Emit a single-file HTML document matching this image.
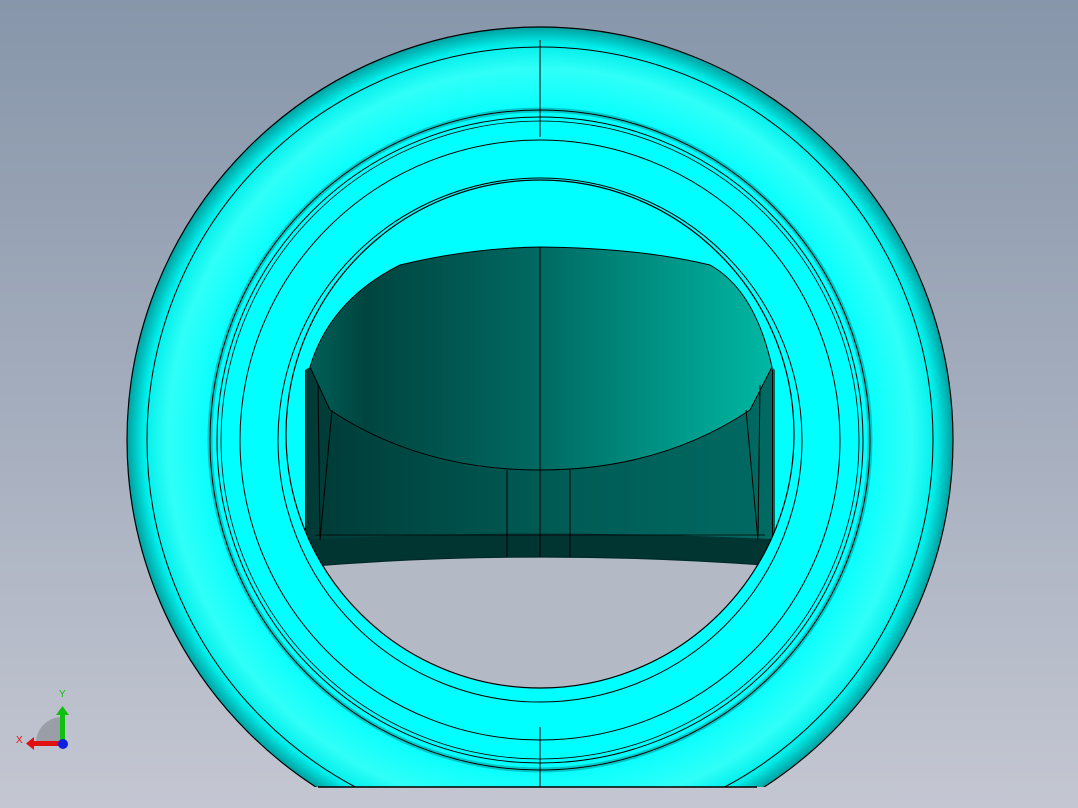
<!DOCTYPE html>
<html><head><meta charset="utf-8"><style>
html,body{margin:0;padding:0;width:1078px;height:808px;overflow:hidden}
svg{display:block}
</style></head><body>
<svg width="1078" height="808" viewBox="0 0 1078 808" xmlns="http://www.w3.org/2000/svg">
<defs>
<linearGradient id="bg" x1="0" y1="0" x2="0" y2="1">
<stop offset="0" stop-color="#8796aa"/><stop offset="0.5" stop-color="#a4adbd"/><stop offset="1" stop-color="#c4c7d2"/>
</linearGradient>
<radialGradient id="ring" cx="540" cy="440" r="413" gradientUnits="userSpaceOnUse">
<stop offset="0.78" stop-color="#00ffff"/><stop offset="0.9" stop-color="#30fff8"/><stop offset="0.96" stop-color="#00eeea"/><stop offset="1" stop-color="#00a0a0"/>
</radialGradient>
<linearGradient id="inner" x1="0" y1="0" x2="1" y2="0">
<stop offset="0" stop-color="#006058"/><stop offset="0.12" stop-color="#00443f"/><stop offset="0.5" stop-color="#006a62"/><stop offset="1" stop-color="#00b8a4"/>
</linearGradient>
<linearGradient id="wall" x1="0" y1="0" x2="1" y2="0">
<stop offset="0" stop-color="#003a36"/><stop offset="0.5" stop-color="#005a54"/><stop offset="1" stop-color="#006a62"/>
</linearGradient>
<clipPath id="cut"><rect x="0" y="0" width="1078" height="787"/></clipPath>
<clipPath id="hole"><circle cx="540" cy="434" r="254"/></clipPath>
</defs>
<rect width="1078" height="808" fill="url(#bg)"/>
<g clip-path="url(#cut)">
<circle cx="540" cy="440" r="413" fill="url(#ring)" stroke="#000" stroke-width="1.2"/>
<circle cx="540" cy="440" r="393" fill="none" stroke="#000" stroke-width="1"/>
<circle cx="540" cy="440" r="330" fill="none" stroke="#00c8c8" stroke-width="5"/>
<circle cx="540" cy="440" r="330" fill="none" stroke="#000" stroke-width="1"/>
<circle cx="540" cy="440" r="323" fill="none" stroke="#000" stroke-width="1"/>
<circle cx="540" cy="440" r="319" fill="none" stroke="#000" stroke-width="0.8"/>
<circle cx="540" cy="440" r="300" fill="none" stroke="#000" stroke-width="1"/>
<circle cx="540" cy="440" r="262" fill="none" stroke="#000" stroke-width="1"/>
</g>
<line x1="757" y1="787" x2="318" y2="787" stroke="#000" stroke-width="1.5"/>
<g clip-path="url(#hole)">
<path d="M305 370 L310 367 L772 367 L775 370 L775 600 L305 600 Z" fill="url(#wall)"/>
<path d="M300 540 Q540 527 790 540 L790 600 L300 600 Z" fill="#003532"/>
<path d="M300 600 L300 567 Q540 547 790 567 L790 700 L300 700 Z" fill="#b4b9c6"/>
<path d="M300 567 Q540 547 790 567" fill="none" stroke="#002a28" stroke-width="1.2"/>
<path d="M310 367 Q330 300 400 265 Q470 248 540 247 Q640 248 710 265 Q755 290 772 367 L750 410 Q660 470 540 470 Q420 470 330 410 Z" fill="url(#inner)" stroke="#000" stroke-width="1"/>
<line x1="305.5" y1="370" x2="305.5" y2="543" stroke="#000"/>
<line x1="318" y1="385" x2="320" y2="537" stroke="#000"/>
<line x1="332" y1="410" x2="320" y2="540" stroke="#000"/>
<line x1="772.5" y1="370" x2="772.5" y2="543" stroke="#000"/>
<line x1="760" y1="385" x2="758" y2="537" stroke="#000"/>
<line x1="746" y1="410" x2="758" y2="540" stroke="#000"/>
<line x1="315" y1="535" x2="765" y2="535" stroke="#000" stroke-width="0.8"/>
<line x1="507" y1="470" x2="507" y2="557" stroke="#000"/>
<line x1="570" y1="470" x2="570" y2="557" stroke="#000"/>
</g>
<circle cx="540" cy="434" r="254" fill="none" stroke="#000" stroke-width="1.2"/>
<line x1="540" y1="40" x2="540" y2="137" stroke="#000"/>
<line x1="540" y1="247" x2="540" y2="557" stroke="#000"/>
<line x1="540" y1="727" x2="540" y2="787" stroke="#000"/>
<path d="M62 743 L36 743 A26 26 0 0 1 62 717 Z" fill="#9a9ea6"/>
<rect x="60" y="714" width="5" height="29" fill="#10c010"/>
<path d="M56 715 L62.5 706 L69 715 Z" fill="#10c010"/>
<rect x="33" y="741" width="29" height="5" fill="#e01010"/>
<path d="M34 737 L26 743.5 L34 750 Z" fill="#e01010"/>
<circle cx="63" cy="744" r="5" fill="#1020e0"/>
<text x="59" y="697" font-family="Liberation Sans, sans-serif" font-size="10" fill="#10c010">Y</text>
<text x="16" y="743" font-family="Liberation Sans, sans-serif" font-size="10" fill="#e01010">X</text>
</svg>
</body></html>
